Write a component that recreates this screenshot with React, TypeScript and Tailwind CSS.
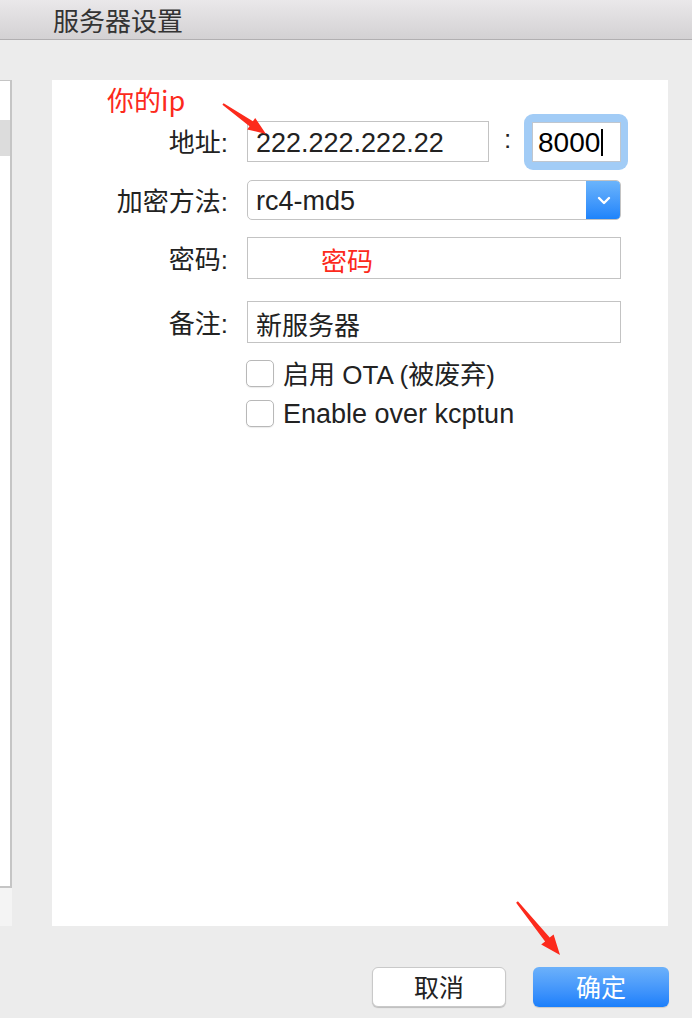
import React from "react";

const font = "font-['Liberation_Sans','Noto_Sans_CJK_SC',sans-serif]";

function Label({ text }: { text: string }) {
  return (
    <div className="w-[176px] shrink-0 text-right text-[26px] leading-none text-[#222] pt-[3px]">{text}</div>
  );
}

export default function App() {
  return (
    <div className={`relative w-[692px] h-[1018px] bg-[#ececec] overflow-hidden ${font}`}>
      {/* title bar */}
      <div className="h-[40px] border-b border-[#b1afb1] bg-gradient-to-b from-[#eae8ea] to-[#d3d1d3] pl-[53px] flex items-center">
        <span className="text-[26px] leading-none text-[#333] font-['Noto_Sans_CJK_SC',sans-serif]">服务器设置</span>
      </div>

      {/* main */}
      <div className="flex pt-[40px]">
        <div className="w-[12px] shrink-0 flex flex-col">
          <div className="h-[808px] bg-white border-t border-r-2 border-b-2 border-[#c5c5c5]">
            <div className="mt-[39px] h-[36px] bg-[#dcdcdc]" />
          </div>
          <div className="h-[38px] bg-[#f4f4f4]" />
        </div>

        <div className="ml-[40px] w-[616px] h-[846px] bg-white flex flex-col pt-[41px]">
          {/* address row */}
          <div className="flex items-center h-[41px]">
            <Label text="地址:" />
            <div className="ml-[19px] w-[242px] h-[41px] border border-[#c3c3c3] flex items-center pl-[8px] pt-[3px] text-[27px] leading-none text-[#222]">
              222.222.222.22
            </div>
            <div className="w-[35px] pl-[2px] text-center text-[26px] leading-none text-[#222] -mt-[6px]">:</div>
            <div className="w-[104px] h-[56px] shrink-0 rounded-[9px] bg-[#a2ccf6] pl-[8px] pr-[7px] py-[8px]">
              <div className="h-full bg-white border border-[#bfc6cf] flex items-center pl-[5px] pt-[3px] text-[28px] leading-none text-black">
                <span>8000</span>
                <span className="ml-[1px] -mt-[2px] w-[2px] h-[27px] bg-black" />
              </div>
            </div>
          </div>

          {/* encryption row */}
          <div className="flex items-center h-[40px] mt-[18px]">
            <Label text="加密方法:" />
            <div className="ml-[19px] w-[374px] h-[40px] rounded-[5px] border border-[#c3c3c3] overflow-hidden flex">
              <div className="flex-1 flex items-center pl-[8px] pt-[3px] text-[27px] leading-none text-[#222]">rc4-md5</div>
              <div className="w-[35px] -my-[1px] -mr-[1px] rounded-r-[5px] bg-gradient-to-b from-[#6cb5fb] to-[#1a82fb] flex items-center justify-center">
                <svg width="14" height="9" viewBox="0 0 14 9">
                  <path d="M2 2 L7 7 L12 2" fill="none" stroke="white" strokeWidth="2.4" strokeLinecap="round" strokeLinejoin="round" />
                </svg>
              </div>
            </div>
          </div>

          {/* password row */}
          <div className="flex items-center h-[42px] mt-[17px]">
            <Label text="密码:" />
            <div className="ml-[19px] w-[374px] h-[42px] border border-[#c3c3c3] flex items-center pl-[73px] pt-[3px] text-[26px] leading-none text-[#fc2a1c] font-['Noto_Sans_CJK_SC',sans-serif]">
              密码
            </div>
          </div>

          {/* note row */}
          <div className="flex items-center h-[42px] mt-[22px]">
            <Label text="备注:" />
            <div className="ml-[19px] w-[374px] h-[42px] border border-[#c3c3c3] flex items-center pl-[8px] pt-[3px] text-[26px] leading-none text-[#222] font-['Noto_Sans_CJK_SC',sans-serif]">
              新服务器
            </div>
          </div>

          {/* checkboxes */}
          <div className="flex items-center h-[27px] mt-[17px] ml-[194px]">
            <div className="w-[28px] h-[27px] shrink-0 rounded-[5px] border border-[#b8b8b8] bg-white shadow-[0_1px_1px_rgba(0,0,0,0.08)]" />
            <span className="ml-[9px] pt-[2px] text-[26px] leading-none text-[#222]">启用 OTA (被废弃)</span>
          </div>
          <div className="flex items-center h-[27px] mt-[13px] ml-[194px]">
            <div className="w-[28px] h-[27px] shrink-0 rounded-[5px] border border-[#b8b8b8] bg-white shadow-[0_1px_1px_rgba(0,0,0,0.08)]" />
            <span className="ml-[9px] pt-[2px] text-[27px] leading-none text-[#222]">Enable over kcptun</span>
          </div>
        </div>
      </div>

      {/* footer buttons */}
      <div className="flex justify-end gap-[27px] pr-[23px] mt-[41px]">
        <button className="w-[134px] h-[40px] rounded-[6px] bg-white border border-[#c9c9c9] shadow-[0_1px_1px_rgba(0,0,0,0.2)] text-[25px] text-[#222] font-['Noto_Sans_CJK_SC',sans-serif] flex items-center justify-center">
          取消
        </button>
        <button className="w-[136px] h-[40px] rounded-[6px] bg-gradient-to-b from-[#6cb1fa] to-[#1a7ffb] shadow-[0_1px_1px_rgba(0,0,0,0.15)] text-[25px] text-white font-['Noto_Sans_CJK_SC',sans-serif] flex items-center justify-center">
          确定
        </button>
      </div>

      {/* annotations */}
      <div className="absolute left-[107px] top-[86px] text-[27px] leading-none text-[#fc2a1c] font-['Noto_Sans_CJK_SC',sans-serif]">
        你的ip
      </div>
      <svg className="absolute left-0 top-0 pointer-events-none" width="692" height="1018" viewBox="0 0 692 1018">
        <polygon
          fill="#fc2a1c"
          points="223.6,103.2 252.9,121.2 255.2,118 266,134 247.2,129.4 249.5,126.2 222.4,104.8"
        />
        <polygon
          fill="#fc2a1c"
          points="517.9,901.2 549.7,937.6 553.6,934.5 560,955 541.2,944.5 545.1,941.4 516.1,902.8"
        />
      </svg>
    </div>
  );
}
